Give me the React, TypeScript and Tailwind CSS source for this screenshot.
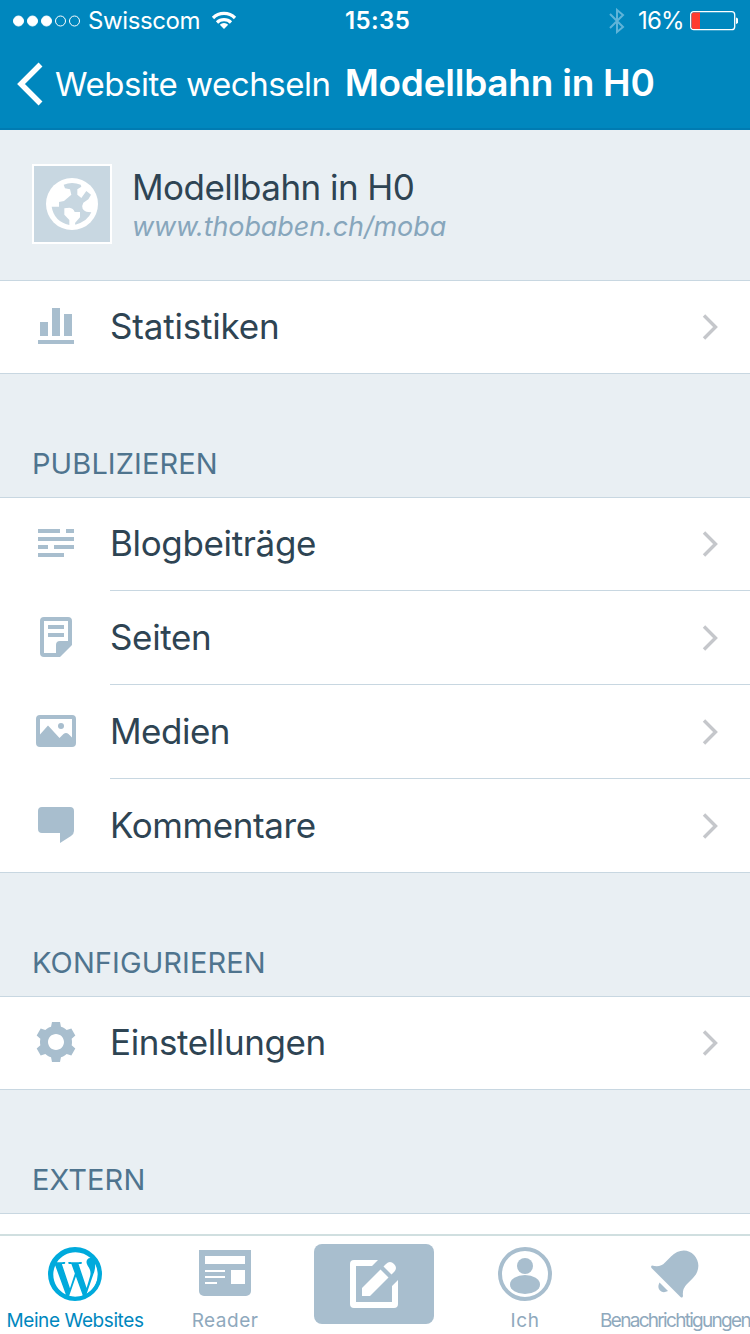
import React from 'react';
import {FaWordpressSimple} from 'react-icons/fa';

const StatsIcon = () => (
    <svg className="h-12 w-12" viewBox="0 0 48 48" fill="currentColor">
        <path d="M8 19h8v14H8zM20 5h8v28h-8zM32 11h8v22h-8zM6 37h36v4H6z"/>
    </svg>
);

const PostsIcon = () => (
    <svg className="h-12 w-12" viewBox="0 0 48 48" fill="currentColor">
        <path d="M6 9h22v4H6zM34 9h8v4h-8zM6 17h36v4H6zM6 25h10v4H6zM22 25h20v4H22zM6 33h26v4H6z"/>
    </svg>
);

const PagesIcon = () => (
    <svg className="h-12 w-12" viewBox="0 0 48 48" fill="currentColor">
        <path
            fillRule="evenodd"
            d="M12 3h24a4 4 0 014 4v24L28 43H12a4 4 0 01-4-4V7a4 4 0 014-4zm0 4v32h12v-8a4 4 0 014-4h8V7z"
        />
        <path d="M16 11h16v4H16zM16 19h16v4H16z"/>
    </svg>
);

const MediaIcon = () => (
    <svg className="h-12 w-12" viewBox="0 0 48 48" fill="currentColor">
        <path
            fillRule="evenodd"
            d="M8 7h32a4 4 0 014 4v24a4 4 0 01-4 4H8a4 4 0 01-4-4V11a4 4 0 014-4zm0 4v15.500l8-9 11.500 12.500 4-4q2.500-2.200 5 0l3.500 3.500V11z"
        />
        <circle cx="29" cy="18" r="3"/>
    </svg>
);

const CommentIcon = () => (
    <svg className="h-12 w-12" viewBox="0 0 48 48" fill="currentColor">
        <path d="M10 5h28a4 4 0 014 4v20q0 3-3 5l-11 7V31H10a4 4 0 01-4-4V9a4 4 0 014-4z"/>
    </svg>
);

const GearIcon = () => (
    <svg className="mb-0.5 h-12 w-12" viewBox="0 0 24 24" fill="currentColor">
        <path d="M20 12c0-.568-.060-1.122-.174-1.656l1.834-1.612-2-3.464-2.322.786c-.819-.736-1.787-1.308-2.859-1.657L14 2h-4l-.480 2.396c-1.070.349-2.040.921-2.859 1.657L4.340 5.268l-2 3.464 1.834 1.612C4.060 10.878 4 11.432 4 12s.060 1.122.174 1.656L2.340 15.268l2 3.464 2.322-.786c.819.736 1.787 1.308 2.859 1.657L10 22h4l.480-2.396c1.070-.349 2.038-.921 2.858-1.657l2.322.786 2-3.464-1.834-1.613c.113-.535.174-1.089.174-1.656zm-8 4c-2.210 0-4-1.790-4-4s1.790-4 4-4 4 1.790 4 4-1.790 4-4 4z"/>
    </svg>
);

const GlobeIcon = () => (
    <svg className="size-[52px]" viewBox="0 0 156 156">
        <circle cx="78" cy="78" r="78" fill="white"/>
        <path
            d="M53 20Q78 10 104 20L106 26 94 34V50L106 60 121 39 135 50 127 64 112 74Q107 82 110 92 115 101 127 102L136 103Q125 130 88 140L87 135 102 118V102H86Q82 90 70 89L55 91V110L70 126V141Q24 130 17 86H39V72L54 69 76 50 72 34 57 31Z"
            fill="#c8d7e1"
        />
    </svg>
);

const Chevron = () => (
    <svg className="h-7 w-4 text-[#c5c7cb]" viewBox="0 0 16 28" fill="none" stroke="currentColor" strokeWidth="3.400">
        <path d="M2 2.500L13.500 14 2 25.500"/>
    </svg>
);

const Row = ({icon, label, className, divider}: {
    icon: React.ReactNode;
    label: string;
    className: string;
    divider?: boolean;
}) => (
    <div className={`flex pl-8 ${className}`}>
        <div className="flex w-[78px] shrink-0 items-center text-[#a8bece]">{icon}</div>
        <div className={`flex flex-1 items-center justify-between pr-8 ${divider ? 'border-b border-[#c8d7e1]' : ''}`}>
            <span className={`text-[35px] whitespace-nowrap text-[#2e4453] ${divider ? '' : 'pb-0.5'}`}>{label}</span>
            <Chevron/>
        </div>
    </div>
);

const StatusBar = () => (
    <div className="flex h-[42px] items-center px-3">
        <div className="flex w-[333px] items-center">
            <svg className="h-3 w-[70px]" viewBox="0 0 70 12" fill="white" stroke="white">
                <circle cx="6.500" cy="6" r="5"/>
                <circle cx="20.500" cy="6" r="5"/>
                <circle cx="34.500" cy="6" r="5"/>
                <circle cx="48.500" cy="6" r="5" fill="none"/>
                <circle cx="62.500" cy="6" r="5" fill="none"/>
            </svg>
            <span className="ml-1.5 text-[24px] tracking-[-0.4px]">Swisscom</span>
            <svg className="ml-[11px] h-5 w-[26px]" viewBox="0 0 26 20" fill="none" stroke="white" strokeWidth="3.200">
                <path d="M2 7a15.500 15.500 0 0122 0M6 11.500a10 10 0 0114 0"/>
                <path d="M13 18l-4.200-4.300a6 6 0 018.400 0z" fill="white" stroke="none"/>
            </svg>
        </div>
        <span className="text-[24px] font-semibold tracking-[0.4px]">15:35</span>
        <div className="ml-auto flex items-center">
            <svg className="mr-[13px] h-[26px] w-4 text-[#5fb4d9]" viewBox="0 0 16 26" fill="none" stroke="currentColor" strokeWidth="2">
                <path d="M1 6l13 13-6 5V2l6 5L1 20"/>
            </svg>
            <span className="text-[24px] tracking-[-0.7px]">16%</span>
            <svg className="ml-1.5 h-5 w-12" viewBox="0 0 48 20">
                <rect x=".700" y=".700" width="44" height="18" rx="3" fill="none" stroke="white" strokeWidth="1.300"/>
                <path d="M3.500 1.500H10V18H3.500a2 2 0 01-2-2V3.500a2 2 0 012-2z" fill="#ff3b30"/>
                <path d="M46 6.500q2.500.500 2.500 3.300t-2.500 3.300z" fill="white"/>
            </svg>
        </div>
    </div>
);

const SectionTitle = ({children}: {children: React.ReactNode}) => (
    <div className="flex h-[124px] shrink-0 items-end border-b border-[#c8d7e1] px-8 pb-[15px]">
        <h2 className="text-[29px] leading-9 tracking-[0.1px] text-[#4f748e]">{children}</h2>
    </div>
);

const TabBar = () => (
    <nav className="mt-auto flex h-[100px] shrink-0 border-t-2 border-[#d0dfe0] bg-white text-[19px] leading-6 text-[#8fa9bd]">
        <div className="flex w-[150px] flex-col items-center pt-2.5 text-[#0087be]">
            <div className="relative flex size-[56px] items-center justify-center text-[#00aadc]">
                <FaWordpressSimple className="size-[51px]"/>
                <svg className="absolute inset-0" viewBox="0 0 56 56" fill="none" stroke="currentColor" strokeWidth="4">
                    <circle cx="28" cy="28" r="25"/>
                </svg>
            </div>
            <span className="mt-[7px] tracking-[-0.4px] whitespace-nowrap">Meine Websites</span>
        </div>
        <div className="flex w-[150px] flex-col items-center pt-3.5">
            <svg className="h-[46px] w-[52px] text-[#a8bece]" viewBox="0 0 52 46">
                <path d="M0 0h52v41a5 5 0 01-5 5H5a5 5 0 01-5-5z" fill="currentColor"/>
                <path d="M6 6h40v8H6zM6 20h20v2H6zM6 26h20v2H6zM6 32h12v2H6zM32 20h14v14H32z" fill="white"/>
            </svg>
            <span className="mt-[13px] tracking-[0.5px]">Reader</span>
        </div>
        <div className="flex w-[150px] justify-center pt-2 pr-0.5">
            <div className="flex h-20 w-[120px] items-center justify-center rounded-lg bg-[#a8bece]">
                <svg className="size-12" viewBox="0 0 48 48" fill="white">
                    <path d="M28 0l-6 6H6v36h36V26l6-6v24a4 4 0 01-4 4H4a4 4 0 01-4-4V4a4 4 0 014-4z"/>
                    <path d="M12 28L30.500 9.500l8 8L20 36h-8z"/>
                    <path d="M33.500 6.500l2.500-2.500q4-4 8 0t0 8l-2.500 2.500z"/>
                </svg>
            </div>
        </div>
        <div className="flex w-[150px] flex-col items-center pt-2.5">
            <svg className="size-[56px] text-[#a8bece]" viewBox="0 0 56 56" fill="currentColor">
                <circle cx="28" cy="28" r="25" fill="none" stroke="currentColor" strokeWidth="4"/>
                <circle cx="28" cy="20" r="8"/>
                <ellipse cx="28" cy="38.500" rx="15" ry="9.500"/>
            </svg>
            <span className="mt-[7px] tracking-[0.6px]">Ich</span>
        </div>
        <div className="flex w-[150px] flex-col items-center pt-3.5">
            <svg className="h-[48px] w-[49px] text-[#a8bece]" viewBox="0 0 49 48" fill="currentColor">
                <path d="M1 15.500q8 2.500 13-3l6-6C27-1 37-1.500 43 5s6 16-1 23l-6 6q-5 5-4 12-.500 2.500-2.500 1L.500 18Q-.500 16 1 15.500z"/>
                <path d="M8.500 32.500L17 41q-5 2.500-8-.500t-.500-8z"/>
            </svg>
            <span className="mt-[11px] tracking-[-1.7px]">Benachrichtigungen</span>
        </div>
    </nav>
);

export default function App() {
    return (
        <div className="flex h-[1334px] w-[750px] flex-col overflow-hidden bg-[#e9eff3] font-[Inter,'Liberation_Sans',sans-serif]">
            <header className="h-[130px] shrink-0 border-b-2 border-[#007bb2] bg-[#0087be] text-white">
                <StatusBar/>
                <div className="flex h-[84px] items-center pl-4">
                    <svg className="h-11 w-[27px]" viewBox="0 0 27 44" fill="none" stroke="white" strokeWidth="5.500">
                        <path d="M24.500 2.500L5 22l19.500 19.500"/>
                    </svg>
                    <div className="ml-3 flex items-baseline pb-[3px]">
                        <span className="text-[33px] tracking-[-0.45px]">Website wechseln</span>
                        <h1 className="ml-[14px] text-[37px] font-semibold tracking-[-0.25px]">Modellbahn in H0</h1>
                    </div>
                </div>
            </header>

            <section className="flex h-[151px] shrink-0 items-start border-b border-[#c8d7e1] px-8 pt-[34px]">
                <div className="flex size-20 items-center justify-center border-2 border-white bg-[#c8d7e1]">
                    <GlobeIcon/>
                </div>
                <div className="ml-5 pt-px">
                    <div className="text-[35px] leading-[44px] tracking-[-0.55px] text-[#2e4453]">Modellbahn in H0</div>
                    <div className="mt-0.5 text-[27px] leading-8 tracking-[-0.1px] text-[#87a6bc] italic">www.thobaben.ch/moba</div>
                </div>
            </section>

            <section className="h-[93px] shrink-0 border-b border-[#c8d7e1] bg-white">
                <Row icon={<StatsIcon/>} label="Statistiken" className="h-[92px] tracking-[-0.2px]"/>
            </section>

            <SectionTitle>PUBLIZIEREN</SectionTitle>
            <section className="h-[375px] shrink-0 border-b border-[#c8d7e1] bg-white">
                <Row icon={<PostsIcon/>} label="Blogbeiträge" className="-mt-px h-[94px] tracking-[-0.35px]" divider/>
                <Row icon={<PagesIcon/>} label="Seiten" className="h-[94px] tracking-[-0.35px]" divider/>
                <Row icon={<MediaIcon/>} label="Medien" className="h-[94px] tracking-[-0.5px]" divider/>
                <Row icon={<CommentIcon/>} label="Kommentare" className="h-[94px] tracking-[-0.4px]"/>
            </section>

            <SectionTitle>KONFIGURIEREN</SectionTitle>
            <section className="h-[93px] shrink-0 border-b border-[#c8d7e1] bg-white">
                <Row icon={<GearIcon/>} label="Einstellungen" className="h-[92px] tracking-[-0.4px]"/>
            </section>

            <SectionTitle>EXTERN</SectionTitle>
            <div className="h-5 shrink-0 bg-white"/>
            <TabBar/>
        </div>
    );
}
